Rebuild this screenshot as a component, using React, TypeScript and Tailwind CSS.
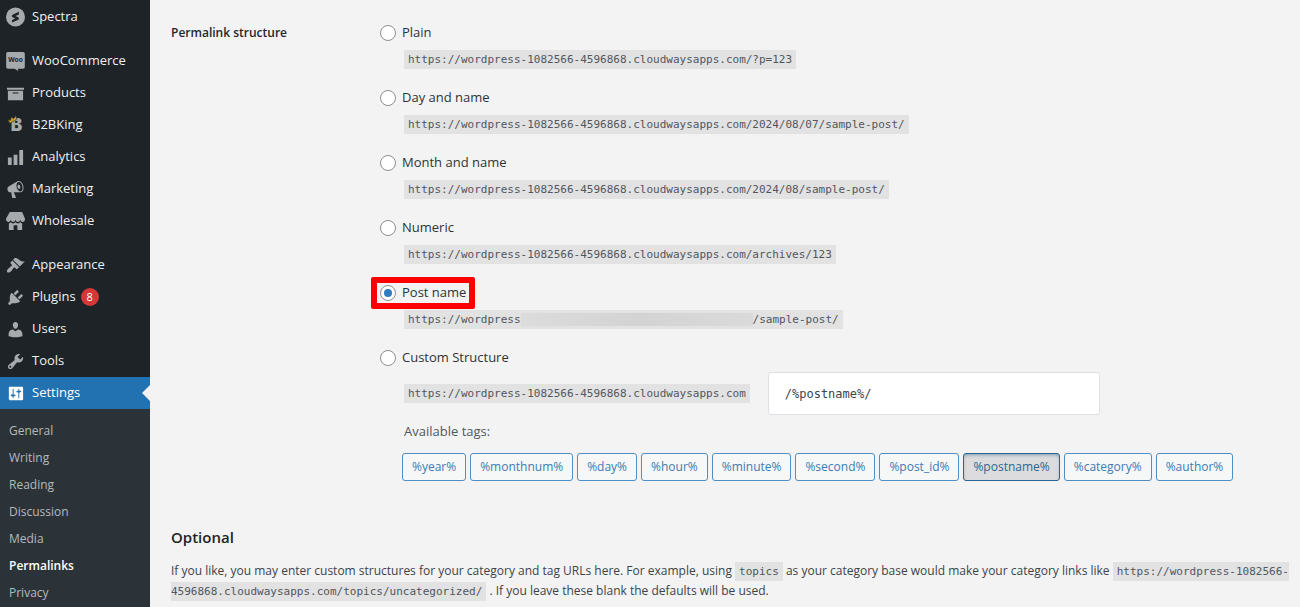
import type { ReactNode } from "react";

const ICONS = {
  archive: "M19 4v2H1V4h18zM2 7h16v10H2V7zm11 3V9H7v1h6z",
  chart: "M18 18V2h-4v16h4zm-6 0V7H8v11h4zm-6 0v-8H2v8h4z",
  megaphone:
    "M18.15 5.94c.46 1.62.38 3.22-.02 4.48-.42 1.28-1.26 2.18-2.3 2.48-.16.06-.26.06-.4.06-.06.02-.12.02-.18.02-.06.02-.14.02-.22.02h-6.8l2.22 5.5c.02.14-.06.26-.14.34-.08.1-.24.16-.34.16H6.95c-.1 0-.26-.06-.34-.16-.08-.08-.16-.2-.14-.34l-1-5.5H4.25l-.02-.02c-.5.06-1.08-.18-1.54-.62s-.88-1.08-1.06-1.88c-.24-.8-.2-1.56-.02-2.2.18-.62.58-1.08 1.06-1.3l.02-.02 9-5.4c.1-.06.18-.1.24-.16.06-.04.14-.08.24-.12.16-.08.28-.12.5-.18 1.04-.3 2.24.1 3.22.98s1.84 2.24 2.26 3.86zm-2.58 5.98h-.02c.4-.1.74-.34 1.04-.7.58-.7.86-1.76.86-3.04 0-.64-.1-1.3-.28-1.98-.34-1.36-1.02-2.5-1.78-3.24s-1.68-1.1-2.46-.88c-.82.22-1.4.96-1.7 2-.32 1.04-.28 2.36.06 3.72.38 1.36 1 2.5 1.8 3.24.78.74 1.62 1.1 2.48.88zm-2.54-7.08c.22-.04.42-.02.62.04.38.16.76.48 1.02 1s.42 1.2.42 1.78c0 .3-.04.56-.12.8-.18.48-.44.84-.86.94-.34.1-.8-.06-1.14-.4s-.64-.86-.78-1.5c-.18-.62-.12-1.24.02-1.72s.48-.84.82-.94z",
  store:
    "M1 10c.41.29.96.43 1.5.43.55 0 1.09-.14 1.5-.43.62-.46 1-1.17 1-2 0 .83.37 1.54 1 2 .41.29.96.43 1.5.43.55 0 1.09-.14 1.5-.43.62-.46 1-1.17 1-2 0 .83.37 1.54 1 2 .41.29.96.43 1.51.43.54 0 1.08-.14 1.49-.43.62-.46 1-1.17 1-2 0 .83.37 1.54 1 2 .41.29.96.43 1.5.43.55 0 1.09-.14 1.5-.43.63-.46 1-1.17 1-2V7l-3-7H4L0 7v1c0 .83.37 1.54 1 2zm2 8.99h5v-5h4v5h5v-7c-.37-.05-.72-.22-1-.43-.63-.45-1-.73-1-1.56 0 .83-.38 1.11-1 1.56-.41.3-.95.43-1.49.44-.55 0-1.1-.14-1.51-.44-.63-.45-1-.73-1-1.56 0 .83-.38 1.11-1 1.56-.41.3-.95.43-1.5.44-.54 0-1.09-.14-1.5-.44-.63-.45-1-.73-1-1.57 0 .84-.38 1.12-1 1.57-.29.21-.63.38-1 .44v6.99z",
  brush:
    "M14.48 11.06L7.41 3.99l1.5-1.5c.5-.56 2.3-.47 3.51.32 1.21.8 1.43 1.28 2.91 2.1 1.18.64 2.45 1.26 4.45.85zm-.71.71L6.7 4.7 4.93 6.47c-.39.39-.39 1.02 0 1.41l1.06 1.06c.39.39.39 1.03 0 1.42-.6.6-1.43 1.11-2.21 1.69-.35.26-.7.53-1.01.84C1.43 14.23.4 16.08 1.4 17.07c.99 1 2.84-.03 4.18-1.36.31-.31.58-.66.85-1.02.57-.78 1.08-1.61 1.69-2.21.39-.39 1.02-.39 1.41 0l1.06 1.06c.39.39 1.02.39 1.41 0z",
  plug: "M13.11 4.36L9.87 7.6 8 5.73l3.24-3.24c.35-.34 1.05-.2 1.56.32.52.51.66 1.21.31 1.55zm-8 1.77l.91-1.12 9.01 9.01-1.19.84c-.71.71-2.63 1.16-3.82 1.16H6.14L4.9 17.26c-.59.59-1.54.59-2.12 0-.59-.58-.59-1.53 0-2.12l1.24-1.24v-3.88c0-1.13.4-3.19 1.09-3.89zm7.26 3.97l3.24-3.24c.34-.35 1.04-.21 1.55.31.52.51.66 1.21.31 1.55l-3.24 3.25z",
  user: "M10 9.25c-2.27 0-2.73-3.44-2.73-3.44C7 4.02 7.82 2 9.97 2c2.16 0 2.98 2.02 2.71 3.81 0 0-.41 3.44-2.68 3.44zm0 2.57L12.72 10c2.39 0 4.52 2.33 4.52 4.53v2.49s-3.65 1.13-7.24 1.13c-3.65 0-7.24-1.13-7.24-1.13v-2.49c0-2.25 1.94-4.48 4.47-4.48z",
  wrench:
    "M16.68 9.77c-1.34 1.34-3.3 1.67-4.95.99l-5.41 6.52c-.99.99-2.59.99-3.58 0s-.99-2.59 0-3.57l6.52-5.42c-.68-1.65-.35-3.61.99-4.95 1.28-1.28 3.12-1.62 4.72-1.06l-2.89 2.89 2.82 2.82 2.86-2.87c.53 1.58.18 3.39-1.08 4.65zM3.81 16.21c.4.39 1.04.39 1.43 0 .4-.4.4-1.04 0-1.43-.39-.4-1.03-.4-1.43 0-.39.39-.39 1.03 0 1.43z",
  sliders:
    "M18 16V4c0-.55-.45-1-1-1H4c-.55 0-1 .45-1 1v12c0 .55.45 1 1 1h13c.55 0 1-.45 1-1zM8 11h1c.55 0 1 .45 1 1s-.45 1-1 1H8v1.5c0 .28-.22.5-.5.5s-.5-.22-.5-.5V13H6c-.55 0-1-.45-1-1s.45-1 1-1h1V5.5c0-.28.22-.5.5-.5s.5.22.5.5V11zm5-2h-1c-.55 0-1-.45-1-1s.45-1 1-1h1V5.5c0-.28.22-.5.5-.5s.5.22.5.5V7h1c.55 0 1 .45 1 1s-.45 1-1 1h-1v5.5c0 .28-.22.5-.5.5s-.5-.22-.5-.5V9z",
};

function Svg({ children }: { children: ReactNode }) {
  return (
    <svg viewBox="0 0 20 20" className="size-[19px] shrink-0 overflow-visible fill-current" aria-hidden="true">
      {children}
    </svg>
  );
}

function Glyph({ name }: { name: keyof typeof ICONS }) {
  return (
    <Svg>
      <path d={ICONS[name]} />
    </Svg>
  );
}

function SpectraIcon() {
  return (
    <Svg>
      <circle cx="10" cy="9.500" r="10" />
      <path
        d="M13.600 4 7.400 6.800c-1.500.7-1.600 2.300-.3 3l2.700 1.200-3.400 1.500v2.800l6-2.600c1.500-.7 1.600-2.400.3-3L10 8.400l3.600-1.600z"
        fill="#1d2327"
      />
    </Svg>
  );
}

function WooIcon() {
  return (
    <Svg>
      <path d="M2 0h16a1.800 1.800 0 0 1 1.800 1.800v14a1.800 1.800 0 0 1-1.800 1.800h-5.500l.5 2.400-4-2.400H2A1.800 1.800 0 0 1 .2 15.800v-14A1.800 1.800 0 0 1 2 0z" />
      <text
        x="10"
        y="11"
        textAnchor="middle"
        fontSize="7"
        fontWeight="700"
        fill="#1d2327"
        fontFamily="Open Sans, sans-serif"
      >
        Woo
      </text>
    </Svg>
  );
}

function KingIcon() {
  return (
    <Svg>
      <text x="5" y="16" fontSize="18" fontWeight="900" fontFamily="Inter, sans-serif">
        B
      </text>
      <path
        d="M4 8 1.800 3.600l2.800 1L5.600 1l2.500 1.800L10.400-.6l1 4z"
        fill="#c79a2b"
        stroke="#1d2327"
        strokeWidth=".6"
      />
    </Svg>
  );
}

type Item = { label: string; icon: ReactNode; badge?: string; active?: boolean };

const GROUPS: Item[][] = [
  [{ label: "Spectra", icon: <SpectraIcon /> }],
  [
    { label: "WooCommerce", icon: <WooIcon /> },
    { label: "Products", icon: <Glyph name="archive" /> },
    { label: "B2BKing", icon: <KingIcon /> },
    { label: "Analytics", icon: <Glyph name="chart" /> },
    { label: "Marketing", icon: <Glyph name="megaphone" /> },
    { label: "Wholesale", icon: <Glyph name="store" /> },
  ],
  [
    { label: "Appearance", icon: <Glyph name="brush" /> },
    { label: "Plugins", icon: <Glyph name="plug" />, badge: "8" },
    { label: "Users", icon: <Glyph name="user" /> },
    { label: "Tools", icon: <Glyph name="wrench" /> },
    { label: "Settings", icon: <Glyph name="sliders" />, active: true },
  ],
];

const SUBMENU = ["General", "Writing", "Reading", "Discussion", "Media", "Permalinks", "Privacy"];

function Sidebar() {
  return (
    <nav className="flex w-[150px] shrink-0 flex-col bg-[#1d2327] text-[#f0f0f1]">
      <div className="flex flex-col gap-3 pt-px">
        {GROUPS.map((group) => (
          <ul key={group[0].label}>
            {group.map((item) => (
              <li key={item.label}>
                <a
                  href="#"
                  className={
                    item.active
                      ? "relative flex h-8 items-center gap-[7px] bg-[#2271b1] pl-1.5 text-[13px] text-white"
                      : "flex h-8 items-center gap-[7px] pl-1.5 text-[13px]"
                  }
                >
                  <span className={item.active ? "text-white" : "text-[#a7aaad]"}>{item.icon}</span>
                  {item.label}
                  {item.badge && (
                    <span className="-ml-0.5 flex size-[18px] items-center justify-center rounded-full bg-[#d63638] text-[11px] text-white">
                      {item.badge}
                    </span>
                  )}
                  {item.active && (
                    <span className="absolute top-2 right-0 border-y-8 border-r-8 border-y-transparent border-r-[#f3f3f3]" />
                  )}
                </a>
              </li>
            ))}
          </ul>
        ))}
      </div>
      <ul className="grow bg-[#2c3338] pt-2 text-xs text-[#b4b9be]">
        {SUBMENU.map((label) => (
          <li key={label}>
            <a
              href="#"
              className={
                label === "Permalinks"
                  ? "flex h-[27px] items-center pl-[9px] font-semibold text-white"
                  : "flex h-[27px] items-center pl-[9px]"
              }
            >
              {label}
            </a>
          </li>
        ))}
      </ul>
    </nav>
  );
}

function Code({ children }: { children: ReactNode }) {
  return (
    <code className="bg-[#e2e2e3] px-1 py-[3px] font-['DejaVu_Sans_Mono',monospace] text-[11px] leading-[13px] text-[#50575e]">
      {children}
    </code>
  );
}

const HOST = "https://wordpress-1082566-4596868.cloudwaysapps.com";

const OPTIONS: { id: string; label: string; sample?: ReactNode }[] = [
  { id: "plain", label: "Plain", sample: HOST + "/?p=123" },
  { id: "day", label: "Day and name", sample: HOST + "/2024/08/07/sample-post/" },
  { id: "month", label: "Month and name", sample: HOST + "/2024/08/sample-post/" },
  { id: "numeric", label: "Numeric", sample: HOST + "/archives/123" },
  {
    id: "postname",
    label: "Post name",
    sample: (
      <>
        https://wordpress
        <span className="inline-block h-[13px] w-[232px] bg-linear-to-r from-[#dcdcdd] via-[#d3d3d4] to-[#dadadb] align-top" />
        /sample-post/
      </>
    ),
  },
  { id: "custom", label: "Custom Structure" },
];

const TAGS = [
  "%year%",
  "%monthnum%",
  "%day%",
  "%hour%",
  "%minute%",
  "%second%",
  "%post_id%",
  "%postname%",
  "%category%",
  "%author%",
];

export default function App() {
  return (
    <div className="flex h-screen overflow-hidden bg-[#f3f3f3] font-['Open_Sans','Noto_Sans',sans-serif] text-[#3c434a]">
      <Sidebar />
      <main className="min-w-0 grow pl-[21px] pr-2">
        <div className="flex pt-[23px]">
          <h3 className="w-[209px] shrink-0 text-xs leading-5 font-semibold text-[#23282d]">
            Permalink structure
          </h3>
          <fieldset className="min-w-0 grow">
            {OPTIONS.map((option) => (
              <div key={option.id} className={option.sample ? "h-[65px]" : ""}>
                <label
                  htmlFor={option.id}
                  className="relative flex h-5 w-fit items-center gap-1.5 text-[13px] font-medium text-[#2c3338]"
                >
                  <input
                    type="radio"
                    name="structure"
                    id={option.id}
                    defaultChecked={option.id === "postname"}
                    className="flex size-4 appearance-none items-center justify-center rounded-full border border-[#8c8f94] bg-white before:size-2 before:rounded-full checked:before:bg-[#2f7cc0]"
                  />
                  {option.label}
                  {option.id === "postname" && (
                    <span className="pointer-events-none absolute -inset-x-[9px] -inset-y-1.5 rounded-xs border-6 border-[#fe0000]" />
                  )}
                </label>
                {option.sample && (
                  <p className="mt-[7px] flex pl-6">
                    <Code>{option.sample}</Code>
                  </p>
                )}
              </div>
            ))}
            <div className="mt-1 flex items-center gap-[18px] pl-6">
              <Code>{HOST}</Code>
              <input
                type="text"
                aria-label="Custom structure"
                defaultValue="/%postname%/"
                className="h-[43px] w-[332px] rounded-[3px] border border-[#dcdfe4] bg-white px-4 font-['DejaVu_Sans_Mono',monospace] text-xs text-[#3c434a]"
              />
            </div>
            <p className="mt-1.5 pl-6 text-[13px] leading-5 text-[#50575e]">Available tags:</p>
            <ul className="mt-3 flex flex-wrap gap-1 pl-[22px]">
              {TAGS.map((tag) => (
                <li key={tag}>
                  <button
                    type="button"
                    className={
                      tag === "%postname%"
                        ? "h-7 rounded-[3px] border border-[#2a6595] bg-[#dcdcde] px-[9px] text-xs text-[#2a6595] shadow-[inset_0_2px_5px_-3px_#0a4b78]"
                        : "h-7 rounded-[3px] border border-[#4f8fc4] bg-[#f6f7f7] px-[9px] text-xs text-[#3a7cb5]"
                    }
                  >
                    {tag}
                  </button>
                </li>
              ))}
            </ul>
          </fieldset>
        </div>
        <h2 className="mt-11 text-[15px] leading-6 font-semibold text-[#1d2327]">Optional</h2>
        <p className="mt-3 text-xs leading-5">
          If you like, you may enter custom structures for your category and tag URLs here. For example, using{" "}
          <Code>topics</Code> as your category base would make your category links like{" "}
          <Code>{HOST}/topics/uncategorized/</Code> . If you leave these blank the defaults will be used.
        </p>
      </main>
    </div>
  );
}
